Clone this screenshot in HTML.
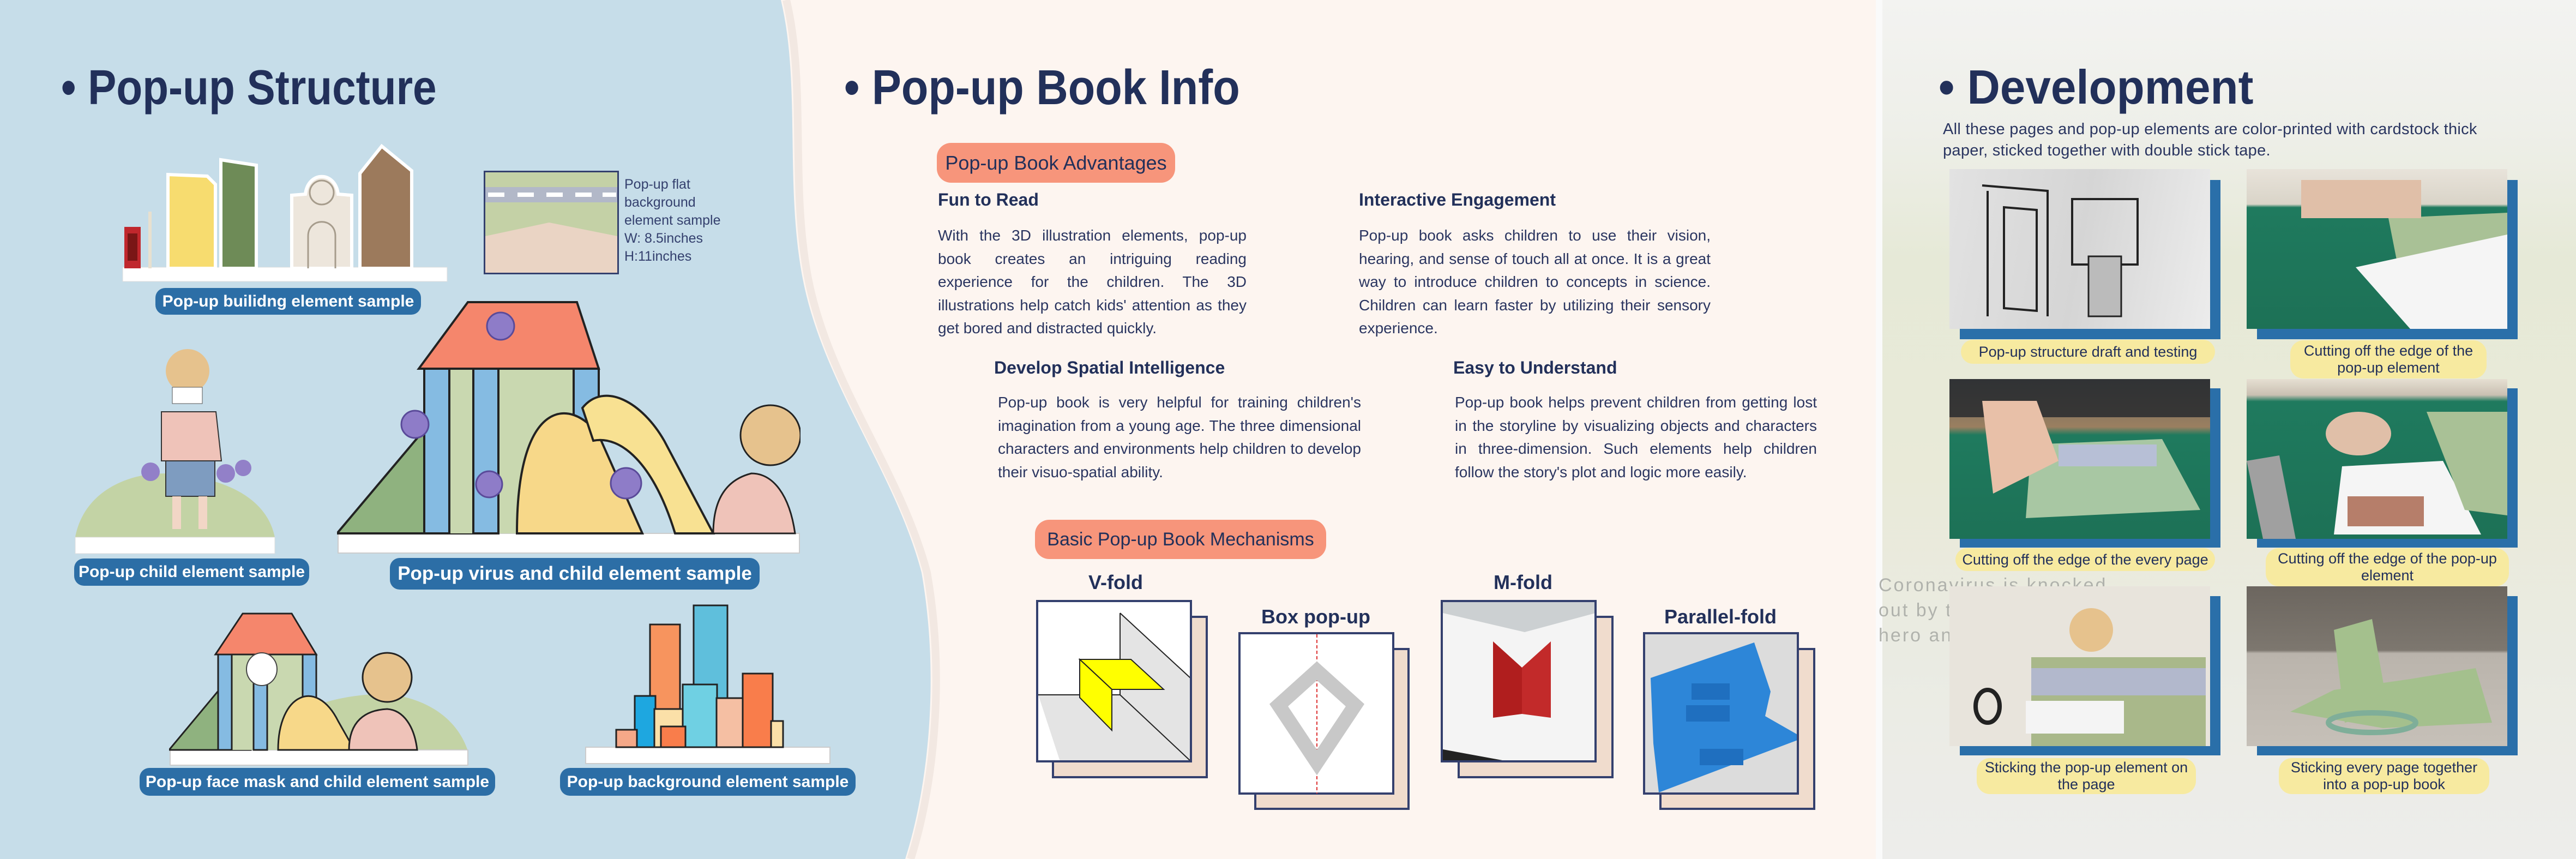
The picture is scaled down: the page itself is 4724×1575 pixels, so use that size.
<!DOCTYPE html>
<html><head><meta charset="utf-8"><style>
*{margin:0;padding:0;box-sizing:border-box}
body{width:4724px;height:1575px;overflow:hidden;position:relative;background:#fdf5f0;font-family:"Liberation Sans",sans-serif;color:#22305a}
.a{position:absolute}
.h{font-weight:bold;font-size:86px;white-space:nowrap;transform-origin:left top;line-height:1}
.lbl{position:absolute;background:#2c6ea6;color:#fff;font-weight:bold;border-radius:18px;text-align:center;white-space:nowrap;font-size:30px}
.pill{position:absolute;background:#f7957b;border-radius:26px;color:#22305a;white-space:nowrap;display:flex;align-items:center;justify-content:center}
.sub{position:absolute;font-weight:bold;font-size:32px;white-space:nowrap}
.body{position:absolute;font-size:28px;line-height:42.5px;text-align:justify;color:#2a3560}
.card{position:absolute;border:4px solid #34406e}
.back{background:#f0dccd}
.mt{position:absolute;font-weight:bold;font-size:36px;text-align:center;width:300px}
.ph{position:absolute;width:478px;height:293px}
.bf{position:absolute;width:478px;height:292px;background:#2a6fa9}
.yl{position:absolute;background:#f7eaa0;border-radius:24px;font-size:27px;text-align:center;line-height:31px;display:flex;align-items:center;justify-content:center;color:#22305a}
</style></head><body>

<div class="a" style="left:3440px;top:0;width:1284px;height:1575px;background:linear-gradient(180deg,#f3f3f1 0%,#eeefe9 15%,#e6e9d7 30%,#e9ead8 55%,#eaebe2 75%,#ededeb 100%)"></div>
<div class="a" style="left:3440px;top:0;width:12px;height:1575px;background:#fafafa"></div>
<div class="a" style="left:3445px;top:1050px;color:#b0b2ac;font-size:34px;line-height:46px;letter-spacing:3px;white-space:nowrap">Coronavirus is knocked<br>out by th<br>hero and</div>

<svg class="a" style="left:0;top:0" width="1760" height="1575">
<path d="M0,0 L1432,0 C1468,150 1440,330 1470,500 C1505,700 1640,860 1690,1050 C1725,1250 1700,1450 1660,1575 L0,1575 Z" fill="#c6dde9"/>
<path d="M1432,0 C1468,150 1440,330 1470,500 C1505,700 1640,860 1690,1050 C1725,1250 1700,1450 1660,1575" fill="none" stroke="#ece2dc" stroke-width="14" transform="translate(10,0)" opacity=".7"/>
</svg>

<div class="a h" style="left:112px;top:116px;font-size:90px;transform:scaleX(.87)">• Pop-up Structure</div>
<div class="a h" style="left:1548px;top:116px;font-size:90px;transform:scaleX(.9)">• Pop-up Book Info</div>
<div class="a h" style="left:3555px;top:116px;font-size:88px;transform:scaleX(.95)">• Development</div>

<svg class="a" style="left:220px;top:258px" width="610" height="265">
<rect x="5" y="232" width="595" height="26" fill="#fff" stroke="#ddd"/>
<rect x="8" y="158" width="30" height="76" fill="#c0272d"/><rect x="14" y="170" width="18" height="50" fill="#7a1616"/>
<rect x="52" y="130" width="6" height="104" fill="#e8e0cf"/>
<polygon points="88,62 160,65 175,80 175,234 88,234" fill="#f7dc6f" stroke="#fff" stroke-width="6"/>
<polygon points="185,35 250,45 250,234 185,234" fill="#6e8b57" stroke="#fff" stroke-width="6"/>
<path d="M315,234 L315,100 L340,98 C345,55 395,55 400,98 L425,100 L425,234 Z" fill="#ede6dc" stroke="#fff" stroke-width="6"/>
<circle cx="370" cy="95" r="22" fill="none" stroke="#a69c8c" stroke-width="3"/>
<path d="M345,234 L345,175 C345,140 395,140 395,175 L395,234" fill="none" stroke="#a69c8c" stroke-width="3"/>
<polygon points="440,60 480,10 535,55 535,234 440,234" fill="#9c7a5c" stroke="#fff" stroke-width="6"/>
</svg>
<div class="lbl" style="left:285px;top:528px;width:487px;height:49px;line-height:49px">Pop-up builidng element sample</div>

<svg class="a" style="left:887px;top:313px" width="248" height="190">
<rect x="1.5" y="1.5" width="245" height="187" fill="#c4d1a6" stroke="#34406e" stroke-width="3"/>
<rect x="3" y="30" width="242" height="28" fill="#b2b8c8"/>
<g fill="#fff"><rect x="8" y="40" width="30" height="8"/><rect x="62" y="40" width="30" height="8"/><rect x="115" y="40" width="30" height="8"/><rect x="168" y="40" width="30" height="8"/><rect x="218" y="40" width="25" height="8"/></g>
<polygon points="3,120 120,95 245,120 245,187 3,187" fill="#ead4c4"/>
</svg>
<div class="a" style="left:1145px;top:322px;font-size:25px;line-height:33px;color:#34406e">Pop-up flat<br>background<br>element sample<br>W: 8.5inches<br>H:11inches</div>

<svg class="a" style="left:136px;top:630px" width="370" height="390">
<path d="M2,355 C20,260 120,230 190,240 C290,250 355,290 368,355 Z" fill="#c3d3a5"/>
<rect x="2" y="355" width="366" height="30" fill="#fff" stroke="#ddd"/>
<circle cx="208" cy="50" r="40" fill="#e6c28d"/>
<rect x="180" y="80" width="55" height="30" fill="#fff" stroke="#555"/>
<path d="M160,125 L260,125 L270,215 L160,215 Z" fill="#efc3b9" stroke="#333" stroke-width="2"/>
<rect x="168" y="215" width="90" height="65" fill="#7e9cc0" stroke="#333" stroke-width="2"/>
<rect x="180" y="280" width="16" height="60" fill="#f2d6c6"/><rect x="228" y="280" width="16" height="60" fill="#f2d6c6"/>
<circle cx="140" cy="235" r="17" fill="#9280c8"/><circle cx="278" cy="238" r="17" fill="#9280c8"/><circle cx="310" cy="228" r="15" fill="#9280c8"/>
</svg>
<div class="lbl" style="left:136px;top:1024px;width:431px;height:50px;line-height:50px">Pop-up child element sample</div>

<svg class="a" style="left:618px;top:548px" width="850" height="470">
<rect x="2" y="430" width="846" height="36" fill="#fff" stroke="#ccc" stroke-width="2"/>
<polygon points="0,430 160,240 280,240 280,430" fill="#8fb27f" stroke="#222" stroke-width="4"/>
<rect x="160" y="128" width="320" height="302" fill="#c9d8b0"/>
<rect x="160" y="128" width="46" height="302" fill="#85bbe2" stroke="#222" stroke-width="4"/>
<rect x="250" y="128" width="46" height="302" fill="#85bbe2" stroke="#222" stroke-width="4"/>
<rect x="434" y="128" width="46" height="302" fill="#85bbe2" stroke="#222" stroke-width="4"/>
<polygon points="150,128 240,6 440,6 480,128" fill="#f5866c" stroke="#222" stroke-width="4"/>
<path d="M330,430 C330,180 430,180 480,250 L560,430 Z" fill="#f7d889" stroke="#222" stroke-width="4"/>
<path d="M450,200 C490,150 560,190 600,260 L690,430 L620,430 C580,300 520,250 470,260 Z" fill="#f8e192" stroke="#222" stroke-width="4"/>
<path d="M690,430 C690,360 720,330 760,320 C800,320 830,360 840,430 Z" fill="#efc3b9" stroke="#222" stroke-width="3"/>
<circle cx="795" cy="250" r="55" fill="#e6c28d" stroke="#222" stroke-width="3"/>
<g fill="#8e7cc8" stroke="#5a4a99" stroke-width="3"><circle cx="300" cy="50" r="25"/><circle cx="143" cy="230" r="25"/><circle cx="279" cy="340" r="24"/><circle cx="530" cy="338" r="28"/></g>
</svg>
<div class="lbl" style="left:715px;top:1023px;width:678px;height:58px;font-size:35px;line-height:58px">Pop-up virus and child element sample</div>

<svg class="a" style="left:310px;top:1122px" width="552" height="285">
<path d="M180,255 C200,170 330,150 400,150 C480,160 530,200 548,255 Z" fill="#c3d3a5"/>
<rect x="2" y="253" width="546" height="28" fill="#fff" stroke="#ccc" stroke-width="2"/>
<polygon points="0,253 90,145 150,145 150,253" fill="#8fb27f" stroke="#222" stroke-width="3"/>
<rect x="90" y="78" width="180" height="175" fill="#c9d8b0"/>
<rect x="90" y="78" width="25" height="175" fill="#85bbe2" stroke="#222" stroke-width="3"/>
<rect x="155" y="78" width="25" height="175" fill="#85bbe2" stroke="#222" stroke-width="3"/>
<rect x="245" y="78" width="25" height="175" fill="#85bbe2" stroke="#222" stroke-width="3"/>
<polygon points="85,78 135,3 225,3 270,78" fill="#f5866c" stroke="#222" stroke-width="3"/>
<path d="M200,253 C200,150 270,120 310,200 L340,253 Z" fill="#f7d889" stroke="#222" stroke-width="3"/>
<path d="M330,253 C330,200 360,180 400,178 C430,180 450,210 455,253 Z" fill="#efc3b9" stroke="#222" stroke-width="3"/>
<circle cx="400" cy="120" r="45" fill="#e6c28d" stroke="#222" stroke-width="3"/>
<ellipse cx="170" cy="105" rx="28" ry="30" fill="#fff" stroke="#444" stroke-width="2"/>
</svg>
<div class="lbl" style="left:256px;top:1408px;width:652px;height:51px;line-height:51px">Pop-up face mask and child element sample</div>

<svg class="a" style="left:1072px;top:1100px" width="452" height="305">
<rect x="2" y="270" width="448" height="30" fill="#fff" stroke="#ccc" stroke-width="2"/>
<rect x="120" y="45" width="55" height="225" fill="#f7945e" stroke="#222" stroke-width="3"/>
<rect x="200" y="10" width="62" height="260" fill="#5fbfdc" stroke="#222" stroke-width="3"/>
<rect x="92" y="176" width="38" height="94" fill="#1ea7e0" stroke="#222" stroke-width="3"/>
<rect x="128" y="200" width="60" height="70" fill="#fbe0a8" stroke="#222" stroke-width="3"/>
<rect x="180" y="155" width="63" height="115" fill="#6fd0e3" stroke="#222" stroke-width="3"/>
<rect x="242" y="180" width="50" height="90" fill="#f5bfa3" stroke="#222" stroke-width="3"/>
<rect x="290" y="135" width="55" height="135" fill="#f97d4b" stroke="#222" stroke-width="3"/>
<rect x="342" y="222" width="22" height="48" fill="#fbe0a8" stroke="#222" stroke-width="3"/>
<rect x="58" y="238" width="38" height="32" fill="#f5a888" stroke="#222" stroke-width="3"/>
<rect x="140" y="232" width="45" height="38" fill="#f97d4b" stroke="#222" stroke-width="3"/>
</svg>
<div class="lbl" style="left:1027px;top:1408px;width:542px;height:51px;line-height:51px">Pop-up background element sample</div>

<div class="pill" style="left:1718px;top:262px;width:437px;height:73px;font-size:36px">Pop-up Book Advantages</div>
<div class="sub" style="left:1720px;top:348px">Fun to Read</div>
<div class="body" style="left:1720px;top:411px;width:566px">With the 3D illustration elements, pop-up book creates an intriguing reading experience for the children. The 3D illustrations help catch kids' attention as they get bored and distracted quickly.</div>
<div class="sub" style="left:2492px;top:348px">Interactive Engagement</div>
<div class="body" style="left:2492px;top:411px;width:645px">Pop-up book asks children to use their vision, hearing, and sense of touch all at once. It is a great way to introduce children to concepts in science. Children can learn faster by utilizing their sensory experience.</div>
<div class="sub" style="left:1823px;top:656px">Develop Spatial Intelligence</div>
<div class="body" style="left:1830px;top:717px;width:666px">Pop-up book is very helpful for training children's imagination from a young age. The three dimensional characters and environments help children to develop their visuo-spatial ability.</div>
<div class="sub" style="left:2665px;top:656px">Easy to Understand</div>
<div class="body" style="left:2668px;top:717px;width:664px">Pop-up book helps prevent children from getting lost in the storyline by visualizing objects and characters in three-dimension. Such elements help children follow the story's plot and logic more easily.</div>

<div class="pill" style="left:1898px;top:953px;width:534px;height:72px;font-size:34px">Basic Pop-up Book Mechanisms</div>

<div class="mt" style="left:1896px;top:1047px">V-fold</div>
<div class="card back" style="left:1929px;top:1129px;width:286px;height:298px"></div>
<div class="card" style="left:1900px;top:1100px;width:286px;height:298px;background:#fff;overflow:hidden">
<svg width="280" height="292"><polygon points="150,20 280,140 280,292 150,292" fill="#e4e4e4"/><polygon points="0,170 150,170 280,292 40,292" fill="#e4e4e4"/><line x1="150" y1="20" x2="150" y2="170" stroke="#222" stroke-width="2"/><line x1="150" y1="20" x2="280" y2="140" stroke="#222" stroke-width="2"/><line x1="150" y1="170" x2="280" y2="292" stroke="#222" stroke-width="2"/><line x1="0" y1="170" x2="150" y2="170" stroke="#222" stroke-width="2"/><polygon points="76,105 170,105 230,160 135,160" fill="#ffff00" stroke="#222" stroke-width="2"/><polygon points="76,105 135,160 135,235 76,175" fill="#ffff00" stroke="#222" stroke-width="2"/></svg></div>

<div class="mt" style="left:2263px;top:1110px">Box pop-up</div>
<div class="card back" style="left:2300px;top:1188px;width:285px;height:297px"></div>
<div class="card" style="left:2271px;top:1159px;width:286px;height:298px;background:#fff">
<svg width="280" height="292"><line x1="140" y1="0" x2="140" y2="292" stroke="#d33" stroke-width="2" stroke-dasharray="6,4"/><polygon points="140,67 210,130 140,235 70,130" fill="none" stroke="#c8c8c8" stroke-width="26"/></svg></div>

<div class="mt" style="left:2643px;top:1047px">M-fold</div>
<div class="card back" style="left:2673px;top:1129px;width:286px;height:298px"></div>
<div class="card" style="left:2642px;top:1100px;width:286px;height:298px;background:#f2f2f2;overflow:hidden">
<svg width="280" height="292"><rect width="280" height="292" fill="#f4f4f4"/><polygon points="0,0 280,0 280,20 150,55 0,20" fill="#ccd0d2"/><polygon points="92,72 145,120 145,205 92,212" fill="#b01e1e"/><polygon points="198,72 145,120 145,205 198,212" fill="#c22a2a"/><polygon points="0,270 120,292 0,292" fill="#222"/></svg></div>

<div class="mt" style="left:3005px;top:1110px">Parallel-fold</div>
<div class="card back" style="left:3043px;top:1188px;width:286px;height:297px"></div>
<div class="card" style="left:3013px;top:1159px;width:286px;height:298px;background:#dcdcdc;overflow:hidden">
<svg width="280" height="292"><polygon points="10,80 200,15 230,105 220,150 290,190 25,290 15,200" fill="#2d86d8"/><g fill="#1f6fbf"><rect x="85" y="90" width="70" height="30"/><rect x="75" y="130" width="80" height="30"/><rect x="100" y="210" width="80" height="30"/></g></svg></div>

<div class="a" style="left:3563px;top:218px;font-size:29px;line-height:39px;color:#2a3560;width:1000px;letter-spacing:.3px">All these pages and pop-up elements are color-printed with cardstock thick paper, sticked together with double stick tape.</div>

<div class="bf" style="left:3594px;top:330px"></div>
<div class="ph" style="left:3575px;top:310px;background:linear-gradient(100deg,#e2e2e2,#d5d5d5 50%,#ececec)"><svg width="478" height="293"><path d="M70,40 L70,270 M60,30 L180,40 L180,270 M100,70 L160,75 L160,260 L100,255 Z" stroke="#222" stroke-width="4" fill="none"/><rect x="225" y="55" width="120" height="120" fill="none" stroke="#222" stroke-width="4"/><rect x="255" y="160" width="60" height="110" fill="#bbb" stroke="#222" stroke-width="3"/></svg></div>
<div class="yl" style="left:3596px;top:623px;width:466px;height:44px">Pop-up structure draft and testing</div>

<div class="bf" style="left:4139px;top:330px"></div>
<div class="ph" style="left:4120px;top:310px;background:linear-gradient(180deg,#e8e3da 0%,#d9d4c8 22%,#1f7a5e 24%,#1d7156 100%)"><svg width="478" height="293"><polygon points="260,90 478,80 478,293 300,293" fill="#a9c196"/><polygon points="200,180 478,120 478,293 300,293" fill="#f5f5f5"/><rect x="100" y="20" width="220" height="70" fill="#e0bfa8"/></svg></div>
<div class="yl" style="left:4200px;top:624px;width:360px;height:70px">Cutting off the edge of the<br>pop-up element</div>

<div class="bf" style="left:3594px;top:712px"></div>
<div class="ph" style="left:3575px;top:695px;background:linear-gradient(180deg,#6d6a60 0%,#9a7f60 30%,#1f7a5e 35%,#1d7156 100%)"><svg width="478" height="293"><rect x="0" y="0" width="478" height="70" fill="#22252a" opacity=".8"/><polygon points="150,120 390,110 460,240 140,255" fill="#a8c7a3"/><rect x="200" y="120" width="180" height="40" fill="#b7bfd6"/><polygon points="60,40 160,40 200,150 80,210" fill="#e8c0a8"/></svg></div>
<div class="yl" style="left:3586px;top:1005px;width:476px;height:42px">Cutting off the edge of the every page</div>

<div class="bf" style="left:4139px;top:712px"></div>
<div class="ph" style="left:4120px;top:695px;background:linear-gradient(180deg,#e6dfd2 0%,#c9c0b2 10%,#1f7a5e 14%,#1d7156 100%)"><svg width="478" height="293"><polygon points="175,160 360,150 430,285 160,285" fill="#f5f5f5"/><polygon points="330,60 478,60 478,250 400,240" fill="#a9c196"/><rect x="185" y="215" width="140" height="55" fill="#b67e6a"/><polygon points="0,150 60,140 90,293 30,293" fill="#a0a0a0"/><ellipse cx="205" cy="100" rx="60" ry="40" fill="#e0bfa8"/></svg></div>
<div class="yl" style="left:4155px;top:1005px;width:446px;height:70px">Cutting off the edge of the pop-up<br>element</div>

<div class="bf" style="left:3594px;top:1093px"></div>
<div class="ph" style="left:3575px;top:1075px;background:#e8e4dc"><svg width="478" height="293"><rect x="150" y="130" width="320" height="163" fill="#a9b88a"/><rect x="150" y="150" width="320" height="50" fill="#b2b8cc"/><rect x="140" y="210" width="180" height="60" fill="#f4f4f4"/><ellipse cx="70" cy="220" rx="22" ry="30" fill="none" stroke="#222" stroke-width="8"/><circle cx="260" cy="80" r="40" fill="#e6c28d"/></svg></div>
<div class="yl" style="left:3625px;top:1390px;width:402px;height:66px">Sticking the pop-up element on<br>the page</div>

<div class="bf" style="left:4139px;top:1093px"></div>
<div class="ph" style="left:4120px;top:1075px;background:linear-gradient(180deg,#6c665f 0%,#7d776f 40%,#bab4ac 42%,#c6c0b8 100%)"><svg width="478" height="293"><polygon points="80,230 160,190 300,170 420,150 450,250 250,260" fill="#a4c08d"/><polygon points="160,80 230,60 260,230 180,250" fill="#a4c08d"/><ellipse cx="230" cy="250" rx="80" ry="18" fill="none" stroke="#7fae99" stroke-width="10"/></svg></div>
<div class="yl" style="left:4179px;top:1390px;width:386px;height:66px">Sticking every page together<br>into a pop-up book</div>

</body></html>
